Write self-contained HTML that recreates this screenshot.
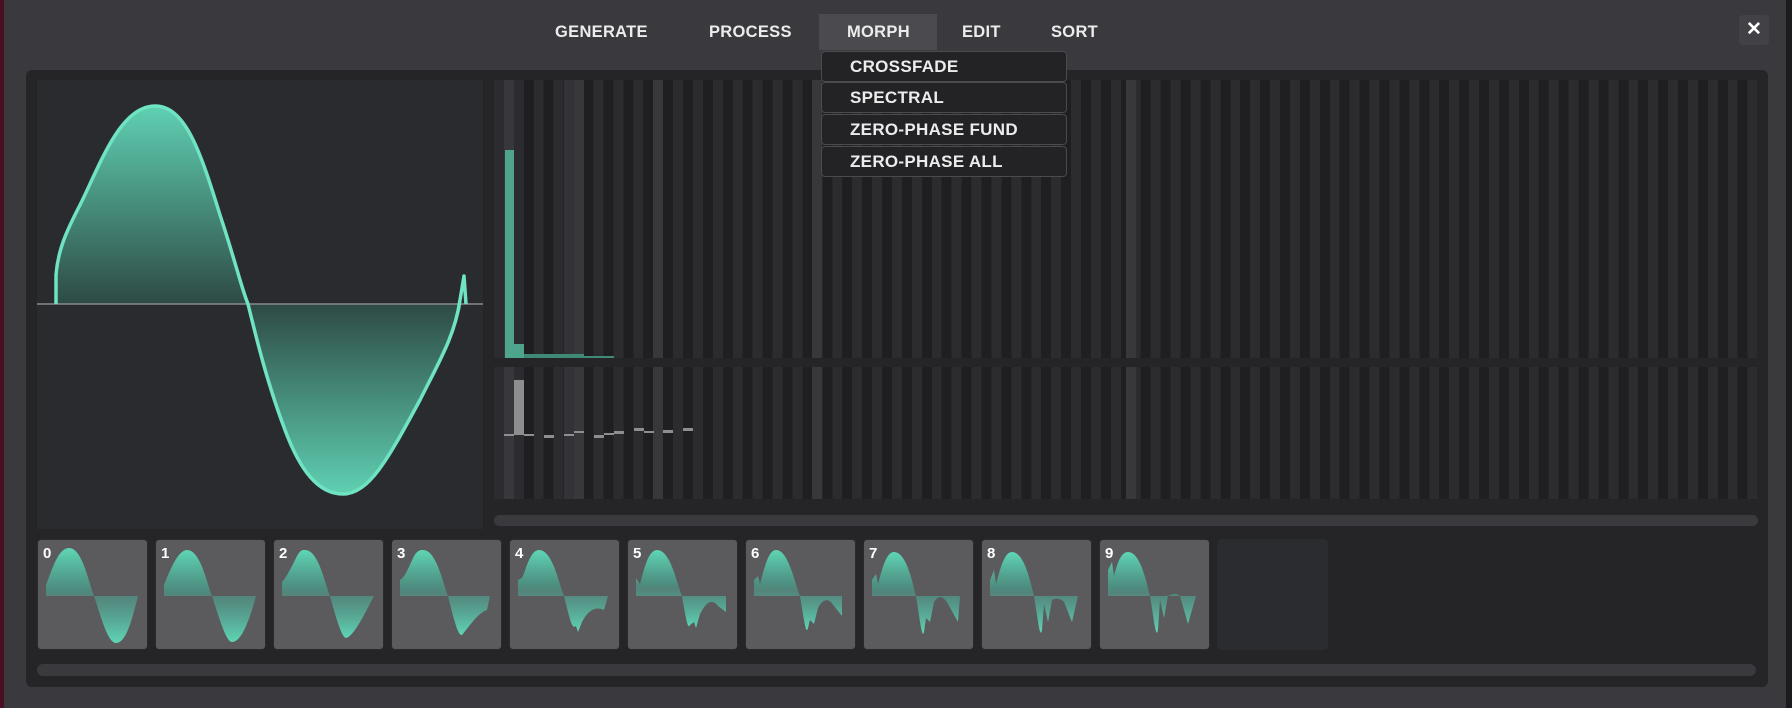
<!DOCTYPE html>
<html><head><meta charset="utf-8"><style>
*{margin:0;padding:0;box-sizing:border-box}
body{width:1792px;height:708px;background:#3a3a3e;position:relative;overflow:hidden;font-family:"Liberation Sans",sans-serif;font-weight:bold;color:#ececec}
.abs{position:absolute}
.tab{position:absolute;top:22px;font-size:16.5px;letter-spacing:0.3px;line-height:20px}
.dd{position:absolute;left:821px;width:246px;height:31px;background:#232326;border:1px solid #4a4a4f;border-radius:4px;font-size:17px;padding-left:28px;line-height:29px;letter-spacing:0.3px}
.thumb{position:absolute;top:539px;width:111px;height:111px;background:#5b5b5e;border-radius:4px;border:1px solid #2a2a2c;overflow:hidden}
.thumb span{position:absolute;left:5px;top:5px;font-size:15px;color:#fff}
.stripes{background:repeating-linear-gradient(90deg,#2c2c30 0px,#2c2c30 9.95px,#1f1f22 9.95px,#1f1f22 19.9px)}
.hl{position:absolute;top:0;bottom:0;width:10px;background:#38383c}
</style></head><body>
<div class="abs" style="left:0;top:0;width:4px;height:708px;background:#4a1022"></div>
<div class="abs" style="left:1786px;top:0;width:6px;height:708px;background:#1b1b1d"></div>

<div class="tab" style="left:555px">GENERATE</div>
<div class="tab" style="left:709px">PROCESS</div>
<div class="abs" style="left:819px;top:14px;width:118px;height:36px;background:#4a4a4f"></div>
<div class="tab" style="left:847px">MORPH</div>
<div class="tab" style="left:962px">EDIT</div>
<div class="tab" style="left:1051px">SORT</div>
<div class="abs" style="left:1739px;top:15px;width:30px;height:30px;background:#414146;border-radius:4px;text-align:center;line-height:30px;font-size:19px;color:#fff">✕</div>

<div class="abs" style="left:26px;top:70px;width:1742px;height:617px;background:#252527;border-radius:6px"></div>
<div class="abs" style="left:37px;top:80px;width:446px;height:449px;background:#2a2b2f"></div>

<div class="abs stripes" style="left:494px;top:80px;width:1264px;height:278px">
 <div class="hl" style="left:10px"></div><div class="hl" style="left:70px;background:#333337"></div><div class="hl" style="left:80px"></div><div class="hl" style="left:159px"></div><div class="hl" style="left:318px"></div><div class="hl" style="left:632px"></div>
 <div class="abs" style="left:11px;top:70px;width:9px;height:208px;background:#4fa48d"></div>
 <div class="abs" style="left:20px;top:264px;width:10px;height:14px;background:#4fa48d"></div>
 <div class="abs" style="left:30px;top:274px;width:60px;height:4px;background:#3f8a77"></div>
 <div class="abs" style="left:90px;top:276px;width:30px;height:2px;background:#3f8a77"></div>
</div>
<div class="abs stripes" style="left:494px;top:367px;width:1264px;height:132px">
 <div class="hl" style="left:10px"></div><div class="hl" style="left:70px;background:#333337"></div><div class="hl" style="left:80px"></div><div class="hl" style="left:159px"></div><div class="hl" style="left:318px"></div><div class="hl" style="left:632px"></div>
 <div class="abs" style="left:20px;top:13px;width:10px;height:55px;background:#8e8e90"></div>
 <div class="abs" style="left:10px;top:67px;width:10px;height:2px;background:#8e8e90"></div>
 <div class="abs" style="left:30px;top:67px;width:10px;height:2px;background:#8e8e90"></div>
 <div class="abs" style="left:50px;top:68px;width:10px;height:3px;background:#8e8e90"></div>
 <div class="abs" style="left:70px;top:67px;width:10px;height:2px;background:#8e8e90"></div>
 <div class="abs" style="left:80px;top:64px;width:10px;height:2px;background:#8e8e90"></div>
 <div class="abs" style="left:100px;top:68px;width:10px;height:3px;background:#8e8e90"></div>
 <div class="abs" style="left:110px;top:66px;width:10px;height:2px;background:#8e8e90"></div>
 <div class="abs" style="left:120px;top:64px;width:10px;height:3px;background:#8e8e90"></div>
 <div class="abs" style="left:140px;top:61px;width:10px;height:3px;background:#8e8e90"></div>
 <div class="abs" style="left:150px;top:64px;width:10px;height:2px;background:#8e8e90"></div>
 <div class="abs" style="left:169px;top:63px;width:10px;height:3px;background:#8e8e90"></div>
 <div class="abs" style="left:189px;top:61px;width:10px;height:3px;background:#8e8e90"></div>
</div>
<div class="abs" style="left:494px;top:515px;width:1264px;height:11px;background:#3a3a3e;border-radius:6px"></div>

<svg class="abs" style="left:0;top:0" width="1792" height="708">
<defs>
<linearGradient id="gu" x1="0" y1="106" x2="0" y2="304" gradientUnits="userSpaceOnUse"><stop offset="0" stop-color="#5fd0b2"/><stop offset="1" stop-color="#2e4a45"/></linearGradient>
<linearGradient id="gd" x1="0" y1="304" x2="0" y2="494" gradientUnits="userSpaceOnUse"><stop offset="0" stop-color="#2e4a45"/><stop offset="1" stop-color="#5fd0b2"/></linearGradient>
<linearGradient id="tg" x1="0" y1="0" x2="0" y2="1"><stop offset="0" stop-color="#5fd6b6"/><stop offset="0.45" stop-color="#4a9787" stop-opacity="0.8"/><stop offset="0.5" stop-color="#4f9f8e" stop-opacity="0.6"/><stop offset="1" stop-color="#5fd6b6"/></linearGradient>
</defs>
<path d="M56,304 L56,275 C58,250 66,232 80,205 C100,165 120,106 155,106 C185,106 200,150 220,215 C235,260 242,290 248,304 Z" fill="url(#gu)"/>
<path d="M248,304 C258,345 268,385 285,430 C300,470 318,494 343,494 C370,494 390,455 420,400 C440,360 455,335 462,304 Z" fill="url(#gd)"/>
<line x1="37" y1="304" x2="483" y2="304" stroke="#8a8a8e" stroke-width="1.5"/>
<path d="M56,304 L56,275 C58,250 66,232 80,205 C100,165 120,106 155,106 C185,106 200,150 220,215 C235,260 242,290 248,304 C258,345 268,385 285,430 C300,470 318,494 343,494 C370,494 390,455 420,400 C440,360 455,335 460,300 L464,276 L466,304" fill="none" stroke="#6fe3c4" stroke-width="3.5" stroke-linejoin="round"/>
</svg>

<div class="dd" style="top:51px">CROSSFADE</div>
<div class="dd" style="top:82px">SPECTRAL</div>
<div class="dd" style="top:114px">ZERO-PHASE FUND</div>
<div class="dd" style="top:146px">ZERO-PHASE ALL</div>

<div class="thumb" style="left:37px"><svg width="111" height="111" class="abs"><path d="M8,56 L8,45 C14,30 20,8 31,8 C44,8 50,40 56,56 C64,80 70,103 78,103 C88,103 94,80 100,56 Z" fill="url(#tg)"/></svg><span>0</span></div>
<div class="thumb" style="left:155px"><svg width="111" height="111" class="abs"><path d="M8,56 L8,45 C14,30 22,10 31,10 C44,10 50,40 56,56 C64,80 70,102 76,102 C86,102 94,78 100,56 Z" fill="url(#tg)"/></svg><span>1</span></div>
<div class="thumb" style="left:273px"><svg width="111" height="111" class="abs"><path d="M8,56 L8,42 C12,38 16,30 22,18 C26,10 28,10 31,10 C44,10 50,40 56,56 C62,78 68,98 72,98 C80,96 90,75 100,56 Z" fill="url(#tg)"/></svg><span>2</span></div>
<div class="thumb" style="left:391px"><svg width="111" height="111" class="abs"><path d="M8,56 L8,40 C14,36 16,28 22,16 C26,10 28,10 31,10 C44,10 50,40 56,56 C62,80 66,96 70,95 L74,90 C82,80 88,72 95,70 L98,56 Z" fill="url(#tg)"/></svg><span>3</span></div>
<div class="thumb" style="left:509px"><svg width="111" height="111" class="abs"><path d="M8,56 L8,40 L12,38 C16,30 20,10 29,10 C42,10 48,40 54,56 C60,80 62,90 66,86 L68,92 L72,82 C78,70 86,66 94,70 L98,56 Z" fill="url(#tg)"/></svg><span>4</span></div>
<div class="thumb" style="left:627px"><svg width="111" height="111" class="abs"><path d="M8,56 L8,38 L12,44 C16,30 20,10 29,10 C42,10 48,40 54,56 C58,80 60,90 62,85 L66,82 L68,88 L72,74 C78,62 84,58 90,66 L98,72 L98,56 Z" fill="url(#tg)"/></svg><span>5</span></div>
<div class="thumb" style="left:745px"><svg width="111" height="111" class="abs"><path d="M8,56 L8,40 L12,36 L14,44 C18,30 22,10 30,10 C42,10 48,40 54,56 C58,80 60,96 62,88 L64,80 L68,84 L72,68 C76,60 82,56 88,66 L96,76 L96,56 Z" fill="url(#tg)"/></svg><span>6</span></div>
<div class="thumb" style="left:863px"><svg width="111" height="111" class="abs"><path d="M8,56 L8,40 L12,34 L14,44 C18,30 22,12 30,12 C42,12 48,40 52,56 C56,80 58,100 60,92 L62,78 L66,82 L70,62 C74,56 78,54 84,64 L94,82 L96,56 Z" fill="url(#tg)"/></svg><span>7</span></div>
<div class="thumb" style="left:981px"><svg width="111" height="111" class="abs"><path d="M8,56 L8,40 L12,30 L14,44 C18,30 22,12 30,12 C42,12 48,40 52,56 C56,80 58,100 60,90 L62,64 L66,82 L70,60 C74,58 78,58 82,62 L90,82 L96,56 Z" fill="url(#tg)"/></svg><span>8</span></div>
<div class="thumb" style="left:1099px"><svg width="111" height="111" class="abs"><path d="M8,56 L8,30 L12,22 L14,36 C18,20 22,12 28,12 C40,12 46,40 50,56 C54,80 56,100 58,90 L60,60 L64,78 L68,56 C72,54 76,52 80,56 L88,84 L96,56 Z" fill="url(#tg)"/></svg><span>9</span></div>
<div class="abs" style="left:1217px;top:539px;width:111px;height:111px;background:#2b2c30;border-radius:4px"></div>

<div class="abs" style="left:37px;top:664px;width:1719px;height:12px;background:#3a3a3e;border-radius:6px"></div>
</body></html>
